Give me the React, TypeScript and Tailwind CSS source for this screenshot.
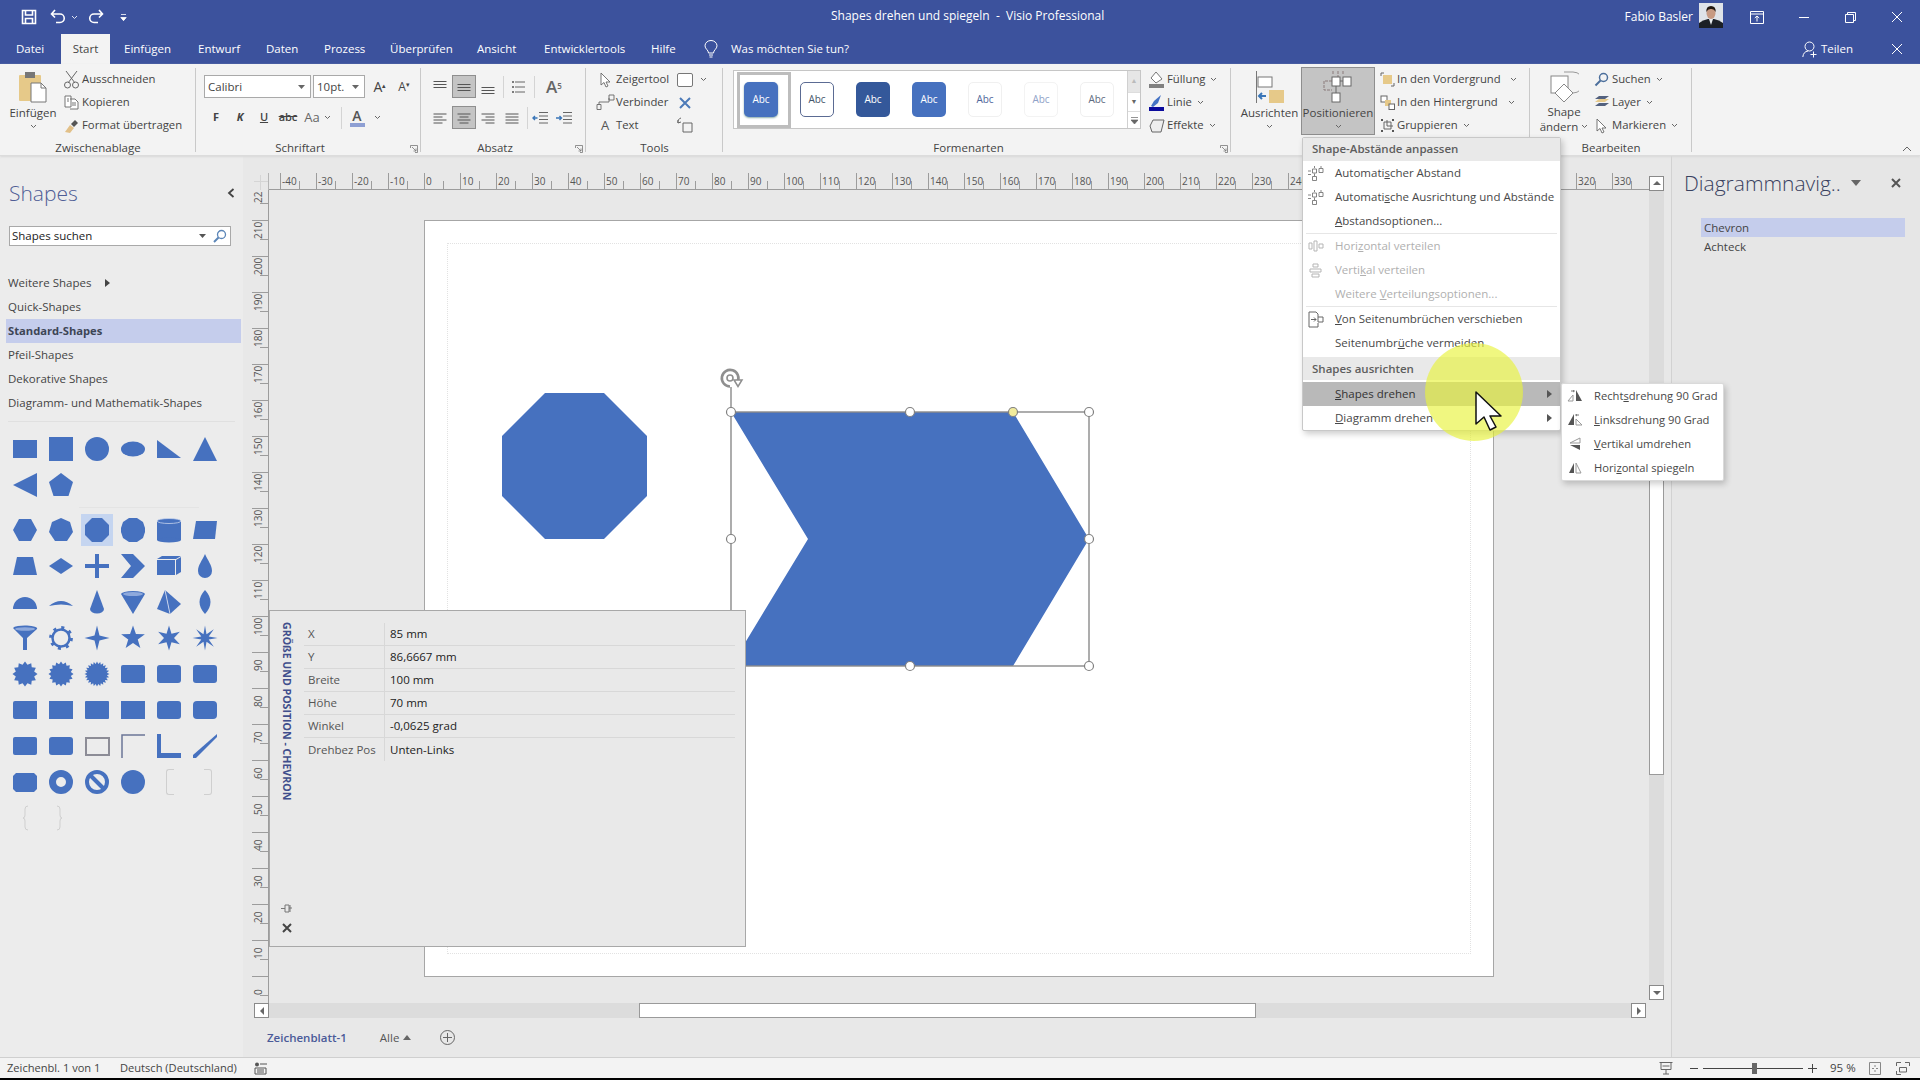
import React from "react";

const B = "#4671bf";

function star(n: number, r1: number, r2: number, rot = -90) {
  const pts: string[] = [];
  for (let i = 0; i < n * 2; i++) {
    const r = i % 2 ? r2 : r1;
    const a = ((rot + (i * 180) / n) * Math.PI) / 180;
    pts.push(`${(13 + r * Math.cos(a)).toFixed(2)},${(13 + r * Math.sin(a)).toFixed(2)}`);
  }
  return pts.join(" ");
}

const P = ({ d }: { d: string }) => <path d={d} fill={B} />;
const Poly = ({ p }: { p: string }) => <polygon points={p} fill={B} />;
const RR = ({ r = 2 }: { r?: number }) => <rect x="1" y="4" width="24" height="18" rx={r} fill={B} />;

const row1: React.ReactNode[] = [
  <rect x="1" y="4" width="24" height="18" fill={B} />,
  <rect x="1" y="1" width="24" height="24" fill={B} />,
  <circle cx="13" cy="13" r="12" fill={B} />,
  <ellipse cx="13" cy="13" rx="12" ry="7.5" fill={B} />,
  <Poly p="1,4 1,22 25,22" />,
  <Poly p="13,1 25,25 1,25" />,
];
const row2: React.ReactNode[] = [<Poly p="25,1 25,25 1,13" />, <Poly p="13,1 25,10 20.5,24 5.5,24 1,10" />];
const rows: React.ReactNode[] = [
  <Poly p="7,2 19,2 25,13 19,24 7,24 1,13" />,
  <Poly p="13,1 22,5 25,15 19,24 7,24 1,15 4,5" />,
  <Poly p="8,1 18,1 25,8 25,18 18,25 8,25 1,18 1,8" />,
  <Poly p="9,1 17,1 23,5 25,11 25,15 23,21 17,25 9,25 3,21 1,15 1,11 3,5" />,
  <g><rect x="1" y="4" width="24" height="19" fill={B} /><ellipse cx="13" cy="23" rx="12" ry="2.5" fill={B} /><ellipse cx="13" cy="4" rx="12" ry="2.5" fill={B} stroke="#c6d3ec" strokeWidth=".8" /></g>,
  <Poly p="4,4 25,4 23,22 1,22" />,
  <Poly p="5,4 21,4 25,22 1,22" />,
  <Poly p="13,5 25,13 13,21 1,13" />,
  <Poly p="11,1 15,1 15,11 25,11 25,15 15,15 15,25 11,25 11,15 1,15 1,11 11,11" />,
  <Poly p="1,1 13,1 25,13 13,25 1,25 11,13" />,
  <g><Poly p="1,7 19,7 19,22 1,22" /><Poly p="1,6 6,3 25,3 20,6" /><Poly p="20,7 25,4 25,19 20,22" /></g>,
  <P d="M13 1 C16 8 20 12 20 18 A7 7 0 0 1 6 18 C6 12 10 8 13 1Z" />,
  <P d="M1 20 A12 12 0 0 1 25 20Z" />,
  <P d="M1 17 Q13 7 25 17 Q13 14 1 17Z" />,
  <P d="M13 1 L20 20 A7 4.5 0 0 1 6 20Z" />,
  <g><P d="M1 5 A12 3 0 0 1 25 5 L13 25Z" /><ellipse cx="13" cy="5" rx="10" ry="2" fill="#8ea9dc" /></g>,
  <g><Poly p="9,1 1,20 14,25" /><Poly p="9,1 25,15 14,25" /><path d="M9 1 L14 25" stroke="#dfe6f5" strokeWidth=".8" /></g>,
  <P d="M13 1 Q24 13 13 25 Q2 13 13 1Z" />,
  <g><P d="M1 3 A12 3 0 0 1 25 4 L15 13 L15 25 L11 25 L11 13Z" /><ellipse cx="13" cy="4" rx="10" ry="1.7" fill="#8ea9dc" /></g>,
  <g fill="none" stroke={B}><circle cx="13" cy="13" r="8.5" strokeWidth="2.5" /><circle cx="13" cy="13" r="10.2" strokeDasharray="3 5" strokeWidth="3.4" /></g>,
  <Poly p={star(4, 12.5, 3.5)} />,
  <Poly p={star(5, 12.5, 5)} />,
  <Poly p={star(6, 12.5, 5)} />,
  <Poly p={star(8, 12.5, 4)} />,
  <Poly p={star(12, 12.5, 9.5)} />,
  <Poly p={star(16, 12.5, 10)} />,
  <Poly p={star(24, 12.5, 10)} />,
  <RR />, <RR r={3} />, <RR r={3} />,
  <P d="M3 4 H25 V22 H3 Q1 22 1 20 V6 Q1 4 3 4Z" />, <RR r={0} />, <RR r={1} />, <RR r={0} />, <RR r={3} />, <RR r={4} />,
  <RR r={2} />, <RR r={3} />,
  <rect x="2" y="5" width="23" height="17" fill="none" stroke="#8c8c96" strokeWidth="2" />,
  <path d="M2 25 V2 H25" fill="none" stroke="#6b7697" strokeWidth="1.5" />,
  <Poly p="1,1 5,1 5,20 25,20 25,25 1,25" />,
  <Poly p="25,1 1,22 1,25 4,25 25,4" />,
  <P d="M4 4 H22 L25 7 V20 L22 23 H4 L1 20 V7Z" />,
  <path fillRule="evenodd" fill={B} d="M13 1 A12 12 0 1 1 13 25 A12 12 0 1 1 13 1Z M13 8 A5 5 0 1 0 13 18 A5 5 0 1 0 13 8Z" />,
  <g><circle cx="13" cy="13" r="10" fill="none" stroke={B} strokeWidth="4" /><path d="M7 7 L19 19" stroke={B} strokeWidth="4" /></g>,
  <circle cx="13" cy="13" r="12" fill={B} />,
];

function ShapeCell({ node, sel }: { node: React.ReactNode; sel?: boolean }) {
  return (
    <div className="w-[36px] h-[36px] flex items-center justify-center">
      <div className={`w-[32px] h-[32px] flex items-center justify-center ${sel ? "bg-[#c5d5f0]" : ""}`}>
        <svg width="26" height="26" viewBox="0 0 26 26">{node}</svg>
      </div>
    </div>
  );
}

function Caret({ className = "" }: { className?: string }) {
  return (
    <svg width="7" height="5" viewBox="0 0 7 5" className={`shrink-0 ${className}`}>
      <path d="M1 1 L3.5 3.5 L6 1" fill="none" stroke="#666" strokeWidth="1" />
    </svg>
  );
}

function Lines({ widths, align = "left", gap = 4 }: { widths: number[]; align?: "left" | "center" | "right"; gap?: number }) {
  return (
    <svg width="14" height="14" viewBox="0 0 14 14">
      {widths.map((w, i) => {
        const x = align === "left" ? 0.5 : align === "right" ? 13.5 - w : 7 - w / 2;
        const y = 7.5 - ((widths.length - 1) * gap) / 2 + i * gap;
        return <line key={i} x1={x} x2={x + w} y1={y} y2={y} stroke="#555" strokeWidth="1" />;
      })}
    </svg>
  );
}

function GroupLabel({ children, launcher }: { children: React.ReactNode; launcher?: boolean }) {
  return (
    <div className={`h-[16px] relative flex items-center justify-center text-[11.5px] text-[#444] leading-none ${launcher ? "pr-[17px]" : ""}`}>
      {children}
      {launcher && (
        <svg width="8" height="8" viewBox="0 0 8 8" className="absolute right-[3px] top-[5px]">
          <path d="M.5 3 V.5 H7.5 V7.5 H5 M2 2 L6 6 M6 3.5 V6 H3.5" fill="none" stroke="#777" strokeWidth=".8" />
        </svg>
      )}
    </div>
  );
}

function Group({ w, children, label, launcher, sep = true }: { w: string; children: React.ReactNode; label?: string; launcher?: boolean; sep?: boolean }) {
  return (
    <div className={`${w} shrink-0 h-[92px] pt-[4px] relative flex flex-col`}>
      <div className="h-[72px] flex">{children}</div>
      <GroupLabel launcher={launcher}>{label}</GroupLabel>
      {sep && <div className="absolute right-0 top-[4px] bottom-[4px] w-px bg-[#c9c9c9]" />}
    </div>
  );
}

function RowText({ icon, text, caret, iw = "w-[20px]" }: { icon: React.ReactNode; text: string; caret?: boolean; iw?: string }) {
  return (
    <div className="h-[23px] flex items-center text-[11.3px] text-[#444] whitespace-nowrap">
      <div className={`${iw} shrink-0 flex items-center justify-center`}>{icon}</div>
      <span>{text}</span>
      {caret && <Caret className="ml-[5px]" />}
    </div>
  );
}

const sw = [
  { c: "bg-[#4671bf] text-white rounded-[5px] shadow-[0_1px_2px_#8aa]" },
  { c: "bg-white text-[#44546a] border border-[#5b6b93] rounded-[5px]" },
  { c: "bg-[#34589a] text-white rounded-[5px]" },
  { c: "bg-[#4671bf] text-white rounded-[5px]" },
  { c: "bg-white text-[#50679c] border border-[#f0f0f0] rounded-[5px]" },
  { c: "bg-white text-[#8fa2c8] border border-[#f3f3f3] rounded-[5px]" },
  { c: "bg-white text-[#5d6a80] border border-[#f0f0f0] rounded-[5px]" },
];

function TitleBar() {
  return (
    <div className="h-[34px] bg-[#3c529d] flex items-center text-white relative">
      <div className="flex items-center h-full">
        <svg width="16" height="16" viewBox="0 0 16 16" className="ml-[21px]"><path d="M1.5 1.5 H14.5 V14.5 H1.5Z M4.5 1.5 V6 H11.5 V1.5 M4.5 14.5 V9.5 H11.5 V14.5" fill="none" stroke="#fff" strokeWidth="1.6" /></svg>
        <svg width="17" height="16" viewBox="0 0 17 16" className="ml-[13px]"><path d="M5 1 L1.5 5 L5 8.5 M2 5 H10 A4.2 4.2 0 0 1 10 13.5 H6" fill="none" stroke="#fff" strokeWidth="1.6" /></svg>
        <svg width="7" height="5" viewBox="0 0 7 5" className="ml-[4px]"><path d="M1 1 L3.5 3.5 L6 1" fill="none" stroke="#dfe4f3" /></svg>
        <svg width="17" height="16" viewBox="0 0 17 16" className="ml-[9px]"><path d="M12 1 L15.5 5 L12 8.5 M15 5 H7 A4.2 4.2 0 0 0 7 13.5 H11" fill="none" stroke="#fff" strokeWidth="1.6" /></svg>
        <svg width="7" height="9" viewBox="0 0 7 9" className="ml-[16px]"><path d="M1 1.5 H6 M.8 4.5 H6.2 L3.5 7.7Z" fill="#fff" stroke="#fff" strokeWidth=".8" /></svg>
      </div>
      <div className="absolute left-[831px] top-[7px] text-[12px] leading-[17px] whitespace-pre">Shapes drehen und spiegeln  -  Visio Professional</div>
      <div className="ml-auto flex items-center h-full">
        <span className="text-[12px] mr-[6px]">Fabio Basler</span>
        <svg width="24" height="25" viewBox="0 0 24 25" className="mb-[3px]">
          <rect width="24" height="25" fill="#dfe3e8" />
          <path d="M0 25 V20 Q4 17 9 16 H15 Q20 17 24 20 V25Z" fill="#1c2026" />
          <path d="M10 16 L12 22 L14 16Z" fill="#e9edf0" />
          <ellipse cx="12" cy="10" rx="4.5" ry="6" fill="#c79a82" />
          <path d="M7.3 9 Q7 3 12 3 Q17 3 16.7 9 Q15 5.5 12 6 Q9 5.5 7.3 9Z" fill="#20170f" />
        </svg>
        <svg width="14" height="13" viewBox="0 0 14 13" className="ml-[27px]"><path d="M.5 .5 H13.5 V12.5 H.5Z M.5 3 H13.5 M7 10.5 V5 M4.8 7 L7 5 L9.2 7" fill="none" stroke="#fff" /></svg>
        <div className="ml-[35px] w-[10px] h-px bg-white" />
        <svg width="11" height="11" viewBox="0 0 11 11" className="ml-[36px]"><path d="M2.5 2.5 V.5 H10.5 V8.5 H8.5 M.5 2.5 H8.5 V10.5 H.5Z" fill="none" stroke="#fff" /></svg>
        <svg width="12" height="12" viewBox="0 0 12 12" className="ml-[35px] mr-[17px]"><path d="M1 1 L11 11 M11 1 L1 11" stroke="#fff" /></svg>
      </div>
    </div>
  );
}

const tabs: [string, string][] = [
  ["Einfügen", "w-[74px]"],
  ["Entwurf", "w-[68px]"],
  ["Daten", "w-[58px]"],
  ["Prozess", "w-[66px]"],
  ["Überprüfen", "w-[87px]"],
  ["Ansicht", "w-[67px]"],
  ["Entwicklertools", "w-[107px]"],
  ["Hilfe", "w-[53px]"],
];

function Tabs() {
  return (
    <div className="h-[30px] bg-[#3c529d] flex items-center text-white text-[11.5px] whitespace-nowrap">
      <span className="ml-[16px] w-[45px]">Datei</span>
      <div className="w-[49px] h-[30px] mr-[14px] bg-[#f3f3f3] text-[#444] flex items-center justify-center">Start</div>
      {tabs.map(([t, w]) => (
        <span key={t} className={`${w} shrink-0`}>{t}</span>
      ))}
      <svg width="14" height="19" viewBox="0 0 14 19"><path d="M4.5 13 C4.5 10 1 9 1 5.8 A6 5.3 0 0 1 13 5.8 C13 9 9.5 10 9.5 13Z M5 15 H9 M5.5 17 H8.5" fill="none" stroke="#fff" /></svg>
      <span className="ml-[13px]">Was möchten Sie tun?</span>
      <div className="ml-auto flex items-center">
        <svg width="16" height="17" viewBox="0 0 16 17"><circle cx="7.5" cy="5.5" r="4.5" fill="none" stroke="#fff" /><path d="M.8 16 Q1.5 10.5 6 10 M11.5 10.5 V16.5 M8.5 13.5 H14.5" fill="none" stroke="#fff" /></svg>
        <span className="ml-[3px]">Teilen</span>
        <svg width="12" height="12" viewBox="0 0 12 12" className="ml-[38px] mr-[17px]"><path d="M1 1 L11 11 M11 1 L1 11" stroke="#fff" /></svg>
      </div>
    </div>
  );
}

const Slot = ({ children, w = "w-[24px]", sel }: { children: React.ReactNode; w?: string; sel?: boolean }) => (
  <div className={`${w} h-[23px] flex items-center justify-center shrink-0 ${sel ? "bg-[#c4c4c4] border border-[#8e8e8e]" : ""}`}>{children}</div>
);
const VSep = () => <div className="w-px h-[22px] bg-[#d4d4d4] shrink-0" />;

function Ribbon() {
  return (
    <div className="h-[92px] bg-[#f3f3f3] flex border-b border-[#dcdcdc] shadow-[0_1px_2px_#d8d8d8] relative text-[#444]">
      <Group w="w-[196px]" label="Zwischenablage">
        <div className="w-[61px] flex flex-col items-center pl-[5px]">
          <svg width="30" height="32" viewBox="0 0 30 32" className="mt-[3px]">
            <rect x="1" y="4" width="22" height="26" rx="1" fill="#e6c989" />
            <rect x="7" y="1" width="10" height="6" fill="#777" />
            <path d="M13 12 H23 L28 17 V31 H13Z" fill="#fff" stroke="#777" />
            <path d="M23 12 V17 H28" fill="none" stroke="#777" />
          </svg>
          <span className="text-[11.5px] mt-[3px] leading-[14px]">Einfügen</span>
          <Caret className="mt-[4px]" />
        </div>
        <div className="flex flex-col">
          <RowText icon={<svg width="15" height="19" viewBox="0 0 15 19"><path d="M2 1 L11 13 M13 1 L4 13" stroke="#666" fill="none" /><circle cx="3.5" cy="15" r="3" fill="none" stroke="#666" /><circle cx="11.5" cy="15" r="3" fill="none" stroke="#666" /></svg>} text="Ausschneiden" iw="w-[21px]" />
          <RowText icon={<svg width="15" height="15" viewBox="0 0 15 15"><path d="M1 1 H7 V12 H1Z M6 4 H11 L14 7 V14 H6 M8 8 H12 M8 10 H12 M3 4 H5 M3 6 H5" fill="#fff" stroke="#666" strokeWidth=".9" /></svg>} text="Kopieren" iw="w-[21px]" />
          <RowText icon={<svg width="16" height="16" viewBox="0 0 16 16"><path d="M1 14 L6 7 L10 10 L6 15Z" fill="#e2c088" /><path d="M7 6 L11 2 L14 5 L10 9Z" fill="#555" /></svg>} text="Format übertragen" iw="w-[21px]" />
        </div>
      </Group>

      <Group w="w-[225px]" label="Schriftart" launcher>
        <div className="pl-[8px] pt-[7px] flex flex-col gap-[8px]">
          <div className="flex items-center h-[23px]">
            <div className="w-[107px] h-[23px] bg-white border border-[#a9a9a9] flex items-center justify-between px-[3px] text-[11.5px]">Calibri<svg width="7" height="4" viewBox="0 0 7 4" className="mr-[2px]"><path d="M0 0 H7 L3.5 4Z" fill="#666" /></svg></div>
            <div className="ml-[2px] w-[52px] h-[23px] bg-white border border-[#a9a9a9] flex items-center justify-between px-[3px] text-[11.5px]">10pt.<svg width="7" height="4" viewBox="0 0 7 4" className="mr-[2px]"><path d="M0 0 H7 L3.5 4Z" fill="#666" /></svg></div>
            <div className="w-[26px] text-center text-[14px] leading-none pl-[4px]">A<sup className="text-[7px]">▴</sup></div>
            <div className="w-[26px] text-center text-[12px] leading-none">A<sup className="text-[7px]">▾</sup></div>
          </div>
          <div className="flex items-center h-[23px] text-[12px]">
            <Slot><b className="text-[11px]">F</b></Slot>
            <Slot><b className="italic text-[11px]">K</b></Slot>
            <Slot><span className="underline font-semibold text-[11px]">U</span></Slot>
            <Slot><span className="line-through text-[11px] font-semibold">abc</span></Slot>
            <Slot><span className="text-[13px] text-[#666]">Aa</span></Slot>
            <Caret />
            <div className="ml-[10px]"><VSep /></div>
            <div className="w-[30px] flex flex-col items-center text-[14px] leading-[14px] font-semibold text-[#555]">A<div className="w-[15px] h-[4px] bg-[#8e9fd3]" /></div>
            <Caret className="ml-[2px]" />
          </div>
        </div>
      </Group>

      <Group w="w-[165px]" label="Absatz" launcher>
        <div className="pl-[7px] pt-[7px] flex flex-col gap-[8px]">
          <div className="flex items-center h-[23px]">
            <Slot><div className="-mt-[6px]"><Lines widths={[13, 13, 13]} gap={3} /></div></Slot>
            <Slot sel><Lines widths={[13, 13, 13]} gap={3} /></Slot>
            <Slot><div className="mt-[6px]"><Lines widths={[13, 13, 13]} gap={3} /></div></Slot>
            <div className="ml-[3px]"><VSep /></div>
            <Slot w="w-[30px]"><svg width="14" height="16" viewBox="0 0 14 16"><path d="M3 3 H13 M3 8 H13 M3 13 H13" stroke="#666" /><circle cx="1" cy="3" r="1" fill="#555" /><circle cx="1" cy="8" r="1" fill="#555" /><circle cx="1" cy="13" r="1" fill="#555" /></svg></Slot>
            <VSep />
            <Slot w="w-[38px]"><span className="text-[17px] font-semibold text-[#666] leading-none">A<sup className="text-[8px]">5</sup></span></Slot>
          </div>
          <div className="flex items-center h-[23px]">
            <Slot><Lines widths={[13, 9, 13, 9]} gap={3} /></Slot>
            <Slot sel><Lines widths={[13, 9, 13, 9]} gap={3} align="center" /></Slot>
            <Slot><Lines widths={[13, 9, 13, 9]} gap={3} align="right" /></Slot>
            <Slot><Lines widths={[13, 13, 13, 13]} gap={3} /></Slot>
            <div className="ml-[3px]"><VSep /></div>
            <Slot w="w-[24px]"><svg width="16" height="14" viewBox="0 0 16 14"><path d="M7 1.5 H16 M7 5 H16 M7 8.5 H16 M7 12 H16" stroke="#666" /><path d="M5.5 7 H1 M3 5 L1 7 L3 9" fill="none" stroke="#3a76b8" strokeWidth="1.4" /></svg></Slot>
            <Slot w="w-[24px]"><svg width="16" height="14" viewBox="0 0 16 14"><path d="M7 1.5 H16 M7 5 H16 M7 8.5 H16 M7 12 H16" stroke="#666" /><path d="M0 7 H5 M3.5 5 L5.5 7 L3.5 9" fill="none" stroke="#3a76b8" strokeWidth="1.4" /></svg></Slot>
          </div>
        </div>
      </Group>

      <Group w="w-[137px]" label="Tools">
        <div className="flex flex-col pl-[8px]">
          <RowText icon={<svg width="11" height="16" viewBox="0 0 11 16"><path d="M1 1 V13 L4 10.5 L6 15 L8 14 L6 10 H10Z" fill="#fff" stroke="#666" strokeWidth=".9" /></svg>} text="Zeigertool" iw="w-[22px]" />
          <RowText icon={<svg width="19" height="17" viewBox="0 0 19 17"><path d="M1 10.5 H5 V15.5 H1Z M13 1 H18 V6 H13Z M3 10.5 V8 H13 V4" fill="none" stroke="#666" strokeWidth=".9" /></svg>} text="Verbinder" iw="w-[22px]" />
          <RowText icon={<span className="text-[13px] text-[#555]">A</span>} text="Text" iw="w-[22px]" />
        </div>
        <div className="flex flex-col ml-[8px] w-[38px] items-start">
          <div className="h-[23px] flex items-center"><div className="w-[16px] h-[14px] bg-white border border-[#777] rounded-[2px]" /><Caret className="ml-[7px]" /></div>
          <div className="h-[23px] flex items-center pl-[2px]"><svg width="12" height="12" viewBox="0 0 12 12"><path d="M1 1 L11 11 M11 1 L1 11" stroke="#4c7ab8" strokeWidth="2" /></svg></div>
          <div className="h-[23px] flex items-center"><svg width="17" height="17" viewBox="0 0 17 17"><path d="M6 6 H15 V15 H6Z" fill="none" stroke="#666" /><path d="M4 1 A4 4 0 0 0 1 6 M1 3 L1 6 L4 5" fill="none" stroke="#666" /></svg></div>
        </div>
      </Group>

      <Group w="w-[508px]" label="Formenarten" launcher>
        <div className="pl-[10px] pt-[2px] flex items-start">
          <div className="w-[408px] h-[59px] bg-white border border-[#c6c6c6] flex items-center relative">
            <div className="absolute left-[3px] top-[1px] w-[54px] h-[56px] border-[3px] border-[#bdbdbd]" />
            <div className="flex ml-[10px] gap-[22px] relative">
              {sw.map((s, i) => (
                <div key={i} className={`w-[34px] h-[35px] flex items-center justify-center text-[10px] ${s.c}`}>Abc</div>
              ))}
            </div>
            <div className="ml-auto w-[13px] h-full flex flex-col border-l border-[#d0d0d0]">
              <div className="h-[21px] bg-[#e6e6e6] flex items-center justify-center text-[7px] text-[#bbb]">▲</div>
              <div className="h-[19px] flex items-center justify-center text-[7px] text-[#666] border-t border-[#ddd]">▼</div>
              <div className="flex-1 flex items-center justify-center border-t border-[#ddd]"><svg width="7" height="7" viewBox="0 0 7 7"><path d="M0 .5 H7 M0 3 H7 L3.5 7Z" stroke="#666" strokeWidth=".7" fill="#666" /></svg></div>
            </div>
          </div>
          <div className="flex flex-col ml-[5px] -mt-[2px]">
            <RowText iw="w-[21px]" caret text="Füllung" icon={<svg width="17" height="17" viewBox="0 0 17 17"><path d="M8 1 L14 8 L8 12 L3 7Z" fill="#fff" stroke="#777" /><rect x="1" y="13" width="15" height="4" fill="#808080" /></svg>} />
            <RowText iw="w-[21px]" caret text="Linie" icon={<svg width="17" height="17" viewBox="0 0 17 17"><path d="M3 12 L6 7 L13 1 L10 9 L5 13Z" fill="#4472c4" /><rect x="1" y="13" width="15" height="4" fill="#0a0a9c" /></svg>} />
            <RowText iw="w-[21px]" caret text="Effekte" icon={<svg width="16" height="16" viewBox="0 0 16 16"><path d="M4 2 H15 L12 14 H3 L1 8Z" fill="#eee" stroke="#666" /></svg>} />
          </div>
        </div>
      </Group>

      <Group w="w-[299px]">
        <div className="w-[70px] flex flex-col items-center pl-[7px] text-[11.5px]">
          <svg width="28" height="32" viewBox="0 0 28 32" className="mt-[3px]">
            <path d="M.5 0 V32" stroke="#777" />
            <rect x="2" y="6" width="14" height="10" fill="#fff" stroke="#777" />
            <rect x="13" y="19" width="15" height="13" fill="#e6c989" />
            <path d="M3 25 H10 M6 22 L3 25 L6 28" fill="none" stroke="#3a76b8" strokeWidth="2" />
          </svg>
          <span className="mt-[3px] leading-[14px]">Ausrichten</span>
          <Caret className="mt-[4px]" />
        </div>
        <div className="w-[74px] h-[68px] -mt-[1px] bg-[#c4c4c4] border border-[#8e8e8e] flex flex-col items-center text-[11.5px]">
          <svg width="30" height="32" viewBox="0 0 30 32" className="mt-[3px]">
            <path d="M15 0 V7 M9 10 H1 V19 H9 M10 0 V3 M20 0 V3" stroke="#8a7a7a" fill="none" strokeDasharray="3 1" />
            <rect x="9" y="6" width="8" height="9" fill="#fff" stroke="#666" />
            <rect x="20" y="6" width="8" height="9" fill="#fff" stroke="#666" />
            <rect x="9" y="22" width="8" height="9" fill="#fff" stroke="#666" />
            <path d="M13 15 V22 M17 10 H20" stroke="#666" />
          </svg>
          <span className="mt-[3px] leading-[14px] whitespace-nowrap">Positionieren</span>
          <Caret className="mt-[4px]" />
        </div>
        <div className="flex flex-col pl-[2px]">
          <div className="flex items-center"><RowText iw="w-[20px]" text="In den Vordergrund" icon={<svg width="15" height="15" viewBox="0 0 15 15"><path d="M1 4 V1 H4 M11 14 H14 V11" fill="none" stroke="#666" /><rect x="3" y="3" width="9" height="9" fill="#e6c989" /></svg>} /><Caret className="ml-[9px]" /></div>
          <div className="flex items-center"><RowText iw="w-[20px]" text="In den Hintergrund" icon={<svg width="15" height="15" viewBox="0 0 15 15"><rect x="1" y="1" width="6" height="6" fill="#fff" stroke="#666" /><rect x="5" y="5" width="6" height="6" fill="#e6c989" /><rect x="9" y="9" width="5.5" height="5.5" fill="#fff" stroke="#666" /></svg>} /><Caret className="ml-[10px]" /></div>
          <RowText iw="w-[20px]" caret text="Gruppieren" icon={<svg width="15" height="15" viewBox="0 0 15 15"><path d="M4 4 H11 V11 H4Z M7 2 V8 H13" fill="none" stroke="#666" /><path d="M1 1 H3 V3 H1Z M12 1 H14 V3 H12Z M1 12 H3 V14 H1Z M12 12 H14 V14 H12Z" fill="#555" /></svg>} />
        </div>
      </Group>

      <Group w="w-[162px]" label="Bearbeiten">
        <div className="w-[68px] -mr-[7px] flex flex-col items-center text-[11.5px]">
          <svg width="30" height="32" viewBox="0 0 30 32" className="mt-[3px]">
            <path d="M15 1 H24 A10 10 0 0 1 24 22 L18 28" fill="none" stroke="#999" />
            <rect x="2" y="5" width="17" height="17" fill="#fff" stroke="#888" />
            <path d="M15 13 L24 22 L15 31 L6 22Z" fill="#fff" stroke="#888" />
          </svg>
          <span className="leading-[15px] mt-[1px]">Shape</span>
          <span className="leading-[15px] flex items-center whitespace-nowrap">ändern<Caret className="ml-[3px]" /></span>
        </div>
        <div className="flex flex-col">
          <RowText iw="w-[21px]" caret text="Suchen" icon={<svg width="15" height="15" viewBox="0 0 15 15"><circle cx="9.5" cy="5.5" r="4" fill="none" stroke="#4c6f9c" strokeWidth="1.5" /><path d="M6.5 8.5 L1.5 13.5" stroke="#4c6f9c" strokeWidth="2" /></svg>} />
          <RowText iw="w-[21px]" caret text="Layer" icon={<svg width="16" height="15" viewBox="0 0 16 15"><path d="M1 11 L5 8 H15 L11 11Z" fill="#53617e" /><path d="M1 7 L5 4 H15 L11 7Z" fill="#e6c989" /><path d="M1 4 L5 1 H15 L11 4Z" fill="#53617e" /></svg>} />
          <RowText iw="w-[21px]" caret text="Markieren" icon={<svg width="11" height="16" viewBox="0 0 11 16"><path d="M1 1 V13 L4 10.5 L6 15 L8 14 L6 10 H10Z" fill="#fff" stroke="#666" strokeWidth=".9" /></svg>} />
        </div>
      </Group>

      <div className="flex-1 relative">
        <svg width="10" height="6" viewBox="0 0 10 6" className="absolute right-[8px] bottom-[3px]"><path d="M1 5 L5 1 L9 5" fill="none" stroke="#666" /></svg>
      </div>
    </div>
  );
}

const sideItems = ["Quick-Shapes", "Standard-Shapes", "Pfeil-Shapes", "Dekorative Shapes", "Diagramm- und Mathematik-Shapes"];

function Sidebar() {
  return (
    <div className="w-[243px] shrink-0 bg-[#ececec] flex flex-col">
      <div className="pt-[20px] pl-[9px] pr-[8px] flex items-center justify-between h-[54px]">
        <span className="text-[21px] font-light text-[#4f5d95] leading-[34px]">Shapes</span>
        <svg width="8" height="10" viewBox="0 0 8 10"><path d="M6.5 1 L2 5 L6.5 9" fill="none" stroke="#444" strokeWidth="1.8" /></svg>
      </div>
      <div className="ml-[9px] mt-[16px] w-[222px] h-[20px] bg-white border border-[#a9a9a9] flex items-center pl-[2px] pr-[3px] text-[11.5px] text-[#222] justify-between">
        <span className="-mt-px">Shapes suchen</span>
        <span className="flex items-center gap-[7px]">
          <svg width="7" height="4" viewBox="0 0 7 4"><path d="M0 0 H7 L3.5 4Z" fill="#555" /></svg>
          <svg width="14" height="14" viewBox="0 0 14 14"><circle cx="8.5" cy="5.5" r="4" fill="none" stroke="#5c86b8" strokeWidth="1.3" /><path d="M5.5 8.5 L1 13" stroke="#5c86b8" strokeWidth="2" /></svg>
        </span>
      </div>
      <div className="mt-[25px] text-[11.5px] text-[#444]">
        <div className="h-[24px] ml-[6px] pl-[2px] flex items-center">
          Weitere Shapes
          <svg width="5" height="8" viewBox="0 0 5 8" className="ml-[14px]"><path d="M0 0 L5 4 L0 8Z" fill="#444" /></svg>
        </div>
        {sideItems.map((t) => (
          <div key={t} className={`h-[24px] ml-[6px] mr-[2px] pl-[2px] flex items-center whitespace-nowrap ${t === "Standard-Shapes" ? "bg-[#c5cdec] font-bold text-[#3d4555] text-[11.2px]" : ""}`}>{t}</div>
        ))}
      </div>
      <div className="h-px bg-[#e0e0e0] mt-[6px] mx-[8px]" />
      <div className="pl-[7px] mt-[9px]">
        <div className="grid grid-cols-[repeat(6,36px)]">
          {row1.map((n, i) => <ShapeCell key={i} node={n} />)}
          {row2.map((n, i) => <ShapeCell key={i} node={n} />)}
        </div>
        <div className="h-px w-[120px] ml-[72px] bg-[#e4e4e4] mt-[4px] mb-[4px]" />
        <div className="grid grid-cols-[repeat(6,36px)]">
          {rows.map((n, i) => <ShapeCell key={i} node={n} sel={i === 2} />)}
          <div className="col-span-2 h-[36px] flex items-center justify-between pl-[15px] pr-[11px]">
            <div className="w-[8px] h-[26px] border-l border-y border-[#cfcfcf] rounded-l-[3px]" />
            <div className="w-[8px] h-[26px] border-r border-y border-[#cfcfcf] rounded-r-[3px]" />
          </div>
          <div className="col-span-2 h-[36px] flex items-center justify-between pl-[15px] pr-[16px]">
            <svg width="7" height="26" viewBox="0 0 7 26"><path d="M6 1 Q3 1 3 4 V10 Q3 13 1 13 Q3 13 3 16 V22 Q3 25 6 25" fill="none" stroke="#cfcfcf" /></svg>
            <svg width="7" height="26" viewBox="0 0 7 26"><path d="M1 1 Q4 1 4 4 V10 Q4 13 6 13 Q4 13 4 16 V22 Q4 25 1 25" fill="none" stroke="#cfcfcf" /></svg>
          </div>
        </div>
      </div>
    </div>
  );
}

const hTicks = Array.from({ length: 38 }, (_, i) => -40 + i * 10);
const vTicks = Array.from({ length: 23 }, (_, i) => 220 - i * 10);

function HRuler() {
  return (
    <div className="flex-1 h-[17px] flex pl-[11px] overflow-hidden border-b border-[#9c9c9c]">
      {hTicks.map((t) => (
        <div key={t} className="w-[36px] shrink-0 h-full border-l border-[#9c9c9c] relative pl-[1px] text-[10px] leading-[17px] text-[#555]">
          {t >= 250 && t <= 310 ? null : t}
          <div className="absolute left-[18px] bottom-0 h-[8px] w-px bg-[#9c9c9c]" />
        </div>
      ))}
    </div>
  );
}

function VRuler() {
  return (
    <div className="w-[17px] shrink-0 border-r border-[#9c9c9c] overflow-hidden">
      <div className="-mt-[6px]">
        {vTicks.map((t) => (
          <div key={t} className="h-[36px] border-t border-[#9c9c9c] relative text-[10px] text-[#555]">
            <div className="absolute left-0 top-[1px] h-[17px] leading-[12px] [writing-mode:vertical-rl] rotate-180 whitespace-nowrap">{t === 220 ? "22" : t}</div>
            <div className="absolute right-0 top-[18px] w-[8px] h-px bg-[#9c9c9c]" />
          </div>
        ))}
      </div>
    </div>
  );
}

const handles: [number, number][] = [[307, 192], [486, 192], [665, 192], [307, 319], [665, 319], [307, 446], [486, 446], [665, 446]];

function Page() {
  return (
    <div className="ml-[155px] mt-[30px] w-[1070px] h-[757px] bg-white border border-[#a6a6a6] relative">
      <div className="absolute left-[22px] top-[22px] right-[22px] bottom-[22px] border border-dotted border-[#e2e2e2]" />
      <svg width="1070" height="757" viewBox="0 0 1070 757" className="absolute -left-px -top-px">
        <polygon points="121,173 180,173 223,216 223,276 180,319 121,319 78,276 78,216" fill={B} />
        <polygon points="307,192 589,192 665,319 589,446 307,446 384,319" fill={B} />
        <rect x="307" y="192" width="358" height="254" fill="none" stroke="#8a8a8a" strokeWidth="1.4" />
        <path d="M307 167 V192" stroke="#8a8a8a" strokeWidth="1.4" />
        {handles.map(([x, y]) => <circle key={`${x}-${y}`} cx={x} cy={y} r="4.5" fill="#fff" stroke="#808080" strokeWidth="1.2" />)}
        <circle cx="589" cy="192" r="4.5" fill="#f1eb9c" stroke="#808080" strokeWidth="1.2" />
        <circle cx="306" cy="158" r="3" fill="#fff" stroke="#8f8f8f" strokeWidth="1.6" />
        <path d="M313.5 162 A8.3 8.3 0 1 0 306 166.5" fill="none" stroke="#8f8f8f" strokeWidth="2.6" />
        <path d="M310 160 L318 160 L314 166.5Z" fill="#fff" stroke="#8f8f8f" strokeWidth="1.5" />
      </svg>
    </div>
  );
}

function ScrollBtn({ dir }: { dir: "up" | "down" | "left" | "right" }) {
  const p = { up: "M1 6 L5 2 L9 6Z", down: "M1 3 L9 3 L5 7Z", left: "M7 1 L7 9 L3 5Z", right: "M3 1 L3 9 L7 5Z" }[dir];
  return (
    <div className="w-[15px] h-[15px] shrink-0 bg-white border border-[#8a8a8a] flex items-center justify-center">
      <svg width="10" height="10" viewBox="0 0 10 10"><path d={p} fill="#666" /></svg>
    </div>
  );
}

function Center() {
  return (
    <div className="flex-1 min-w-0 bg-[#e8e8e8] flex flex-col">
      <div className="h-[17px] shrink-0" />
      <div className="flex-1 min-h-0 flex">
        <div className="w-[1397px] ml-[9px] shrink-0 flex flex-col">
          <div className="h-[17px] shrink-0 flex">
            <div className="w-[17px] shrink-0 border-r border-[#b5b5b5] relative">
              <div className="absolute left-[2px] right-0 top-[8px] h-px bg-[#d5d5d5]" />
              <div className="absolute left-[8px] top-[2px] bottom-0 w-px bg-[#d5d5d5]" />
            </div>
            <HRuler />
          </div>
          <div className="flex-1 min-h-0 flex overflow-hidden">
            <VRuler />
            <div className="flex-1 min-w-0"><Page /></div>
          </div>
        </div>
        <div className="w-[15px] shrink-0 pt-[3px] pb-[3px] flex flex-col">
          <ScrollBtn dir="up" />
          <div className="flex-1 bg-[#dcdcdc] flex flex-col">
            <div className="mt-[192px] h-[392px] bg-white border border-[#9a9a9a]" />
          </div>
          <ScrollBtn dir="down" />
        </div>
      </div>
      <div className="h-[15px] shrink-0 flex pl-[11px]">
        <ScrollBtn dir="left" />
        <div className="w-[1362px] bg-[#dcdcdc] shrink-0">
          <div className="ml-[370px] w-[617px] h-[15px] bg-white border border-[#9a9a9a]" />
        </div>
        <ScrollBtn dir="right" />
      </div>
      <div className="h-[39px] shrink-0 flex items-center pl-[24px] text-[11.5px]">
        <span className="font-semibold text-[#4a5a98]">Zeichenblatt-1</span>
        <span className="ml-[33px] text-[#555]">Alle</span>
        <svg width="8" height="5" viewBox="0 0 8 5" className="ml-[4px]"><path d="M0 5 L4 0 L8 5Z" fill="#666" /></svg>
        <svg width="15" height="15" viewBox="0 0 15 15" className="ml-[29px]"><circle cx="7.5" cy="7.5" r="7" fill="none" stroke="#666" /><path d="M7.5 3 V12 M3 7.5 H12" stroke="#666" /></svg>
      </div>
    </div>
  );
}

function RightPane() {
  return (
    <div className="w-[249px] shrink-0 bg-[#e6e6e6] border-l border-[#d2d2d2]">
      <div className="pl-[12px] pr-[19px] flex items-center h-[56px]">
        <span className="text-[21px] font-light text-[#39415f] whitespace-nowrap">Diagrammnavig..</span>
        <svg width="10" height="6" viewBox="0 0 10 6" className="ml-[10px] -mt-[3px]"><path d="M0 0 H10 L5 6Z" fill="#666" /></svg>
        <svg width="10" height="10" viewBox="0 0 10 10" className="ml-auto -mt-[3px]"><path d="M1 1 L9 9 M9 1 L1 9" stroke="#555" strokeWidth="2" /></svg>
      </div>
      <div className="ml-[29px] mr-[15px] mt-[6px] text-[11.5px] text-[#444]">
        <div className="h-[19px] bg-[#c5cdec] pl-[3px] flex items-center">Chevron</div>
        <div className="h-[19px] pl-[3px] flex items-center">Achteck</div>
      </div>
    </div>
  );
}

function StatusBar() {
  return (
    <div className="h-[21px] bg-[#f3f3f3] border-t border-[#cfcfcf] flex items-center text-[11.1px] text-[#444] whitespace-nowrap">
      <span className="ml-[7px] w-[113px] shrink-0">Zeichenbl. 1 von 1</span>
      <span className="w-[134px] shrink-0">Deutsch (Deutschland)</span>
      <svg width="13" height="13" viewBox="0 0 13 13"><circle cx="3" cy="2.5" r="2" fill="#555" /><path d="M6 2 H13 M1 6 H12 V12 H1Z M3 8 H10 M3 10 H10" stroke="#555" fill="none" /></svg>
      <div className="ml-auto flex items-center">
        <svg width="14" height="14" viewBox="0 0 14 14"><path d="M.5 1.5 H13.5 M2 1.5 V8.5 H12 V1.5 M7 8.5 V13 M4 13 H10 M3.5 5 H10.5" stroke="#666" fill="none" /></svg>
        <div className="ml-[17px] w-[8px] h-px bg-[#444]" />
        <div className="ml-[5px] w-[100px] h-px bg-[#444] relative">
          <div className="absolute left-[49px] -top-[5px] w-[5px] h-[11px] bg-[#666]" />
        </div>
        <svg width="9" height="9" viewBox="0 0 9 9" className="ml-[5px]"><path d="M4.5 0 V9 M0 4.5 H9" stroke="#444" /></svg>
        <span className="ml-[13px] w-[26px] text-[11.5px]">95 %</span>
        <svg width="12" height="13" viewBox="0 0 12 13" className="ml-[13px]"><path d="M.5 .5 H11.5 V12.5 H.5Z M6 3 V5 M6 8 V10 M3 6.5 H5 M7 6.5 H9" stroke="#888" fill="none" /></svg>
        <svg width="14" height="13" viewBox="0 0 14 13" className="ml-[15px] mr-[10px]"><path d="M.5 4 V.5 H5 M9 .5 H13.5 V4 M.5 9 V12.5 H5 M3.5 5.5 H10.5 V10 H3.5Z" stroke="#666" fill="none" /></svg>
      </div>
    </div>
  );
}

const spacingIcon = (
  <svg width="16" height="15" viewBox="0 0 16 15"><path d="M4.5 3 H8.5 V7 H4.5Z M11 2.5 H15 V6.5 H11Z M4.5 10.5 H8.5 V14.5 H4.5Z M0 5 H3 M0 8.5 H3 M6.5 0 V2 M13 0 V2 M6.5 7.5 V10" fill="none" stroke="#777" strokeWidth=".9" /></svg>
);

const I = {
  spacing: spacingIcon,
  hdist: <svg width="16" height="12" viewBox="0 0 16 12"><path d="M1 3 H4 V9 H1Z M6 1 H9 V11 H6Z M11 4 H15 V8 H11Z" fill="none" stroke="#b5b5b5" /></svg>,
  vdist: <svg width="13" height="15" viewBox="0 0 13 15"><path d="M4 1 H9 V4 H4Z M1 6 H12 V9 H1Z M3 11 H10 V14 H3Z" fill="none" stroke="#b5b5b5" /></svg>,
  page: <svg width="16" height="17" viewBox="0 0 16 17"><path d="M1 1 H8 L10 3 V6 M10 12 V16 H1 V1 M3 8.5 H8 M6 6.5 L8 8.5 L6 10.5 M10 6 H15 V11 H10Z" fill="none" stroke="#666" /></svg>,
  rr: <svg width="16" height="12" viewBox="0 0 16 12"><path d="M1 11 L6 5 V11Z" fill="#fff" stroke="#999" /><path d="M4 1 H7 M6 0 L7.5 1 L6 2" fill="none" stroke="#777" /><path d="M9 11 H15 L9 0Z" fill="#555" /></svg>,
  rl: <svg width="16" height="12" viewBox="0 0 16 12"><path d="M1 11 H7 V0Z" fill="#555" /><path d="M9 5 V11 H15Z" fill="#fff" stroke="#999" /><path d="M12 1 H9 M10 0 L8.5 1 L10 2" fill="none" stroke="#777" /></svg>,
  vf: <svg width="12" height="14" viewBox="0 0 12 14"><path d="M11 1 V6 H1Z" fill="#fff" stroke="#999" /><path d="M1 8 H11 V13Z" fill="#555" /></svg>,
  hf: <svg width="14" height="12" viewBox="0 0 14 12"><path d="M6 1 V11 H1Z" fill="#555" /><path d="M8 1 V11 H13Z" fill="#fff" stroke="#999" /></svg>,
};

function MRow({ icon, children, disabled, sel, arrow }: { icon?: React.ReactNode; children: React.ReactNode; disabled?: boolean; sel?: boolean; arrow?: boolean }) {
  return (
    <div className={`h-[24px] flex items-center whitespace-nowrap ${sel ? "bg-[#b9b9b9]" : ""} ${disabled ? "text-[#b0b0b0]" : sel ? "text-[#333]" : "text-[#484848]"}`}>
      <div className="w-[25px] shrink-0 flex items-center justify-center">{icon}</div>
      <span className="ml-[7px]">{children}</span>
      {arrow && <svg width="5" height="8" viewBox="0 0 5 8" className="ml-auto mr-[8px]"><path d="M0 0 L5 4 L0 8Z" fill="#555" /></svg>}
    </div>
  );
}

const MHead = ({ children, className = "" }: { children: React.ReactNode; className?: string }) => (
  <div className={`h-[23px] bg-[#e9e9e9] flex items-center pl-[9px] font-semibold text-[#5e5e5e] ${className}`}>{children}</div>
);

function Menu() {
  return (
    <div className="absolute left-[1302px] top-[137px] w-[259px] h-[294px] bg-white border border-[#c8c8c8] rounded-[2px] shadow-[2px_3px_6px_rgba(0,0,0,0.2)] text-[11.5px] z-20">
      <MHead><span className="-mt-px">Shape-Abstände anpassen</span></MHead>
      <MRow icon={I.spacing}>Automati<u>s</u>cher Abstand</MRow>
      <MRow icon={I.spacing}>Automati<u>s</u>che Ausrichtung und Abstände</MRow>
      <MRow><u>A</u>bstandsoptionen...</MRow>
      <div className="h-px bg-[#e6e6e6] mx-[3px]" />
      <MRow disabled icon={I.hdist}>Hori<u>z</u>ontal verteilen</MRow>
      <MRow disabled icon={I.vdist}>Verti<u>k</u>al verteilen</MRow>
      <MRow disabled>Weitere <u>V</u>erteilungsoptionen...</MRow>
      <div className="h-px bg-[#e6e6e6] mx-[3px]" />
      <MRow icon={I.page}><u>V</u>on Seitenumbrüchen verschieben</MRow>
      <MRow>Seitenumbr<u>ü</u>che vermeiden</MRow>
      <MHead className="mt-[2px]">Shapes ausrichten</MHead>
      <div className="h-[2px]" />
      <MRow sel arrow><u>S</u>hapes drehen</MRow>
      <MRow arrow><u>D</u>iagramm drehen</MRow>
    </div>
  );
}

function SubMenu() {
  const R = ({ icon, children }: { icon: React.ReactNode; children: React.ReactNode }) => (
    <div className="h-[24px] flex items-center whitespace-nowrap text-[#484848]">
      <div className="w-[25px] shrink-0 flex items-center justify-center">{icon}</div>
      <span className="ml-[7px]">{children}</span>
    </div>
  );
  return (
    <div className="absolute left-[1561px] top-[383px] w-[163px] h-[98px] bg-white border border-[#dadada] rounded-[2px] shadow-[2px_3px_6px_rgba(0,0,0,0.2)] text-[11.2px] z-20">
      <R icon={I.rr}>Recht<u>s</u>drehung 90 Grad</R>
      <R icon={I.rl}><u>L</u>inksdrehung 90 Grad</R>
      <R icon={I.vf}><u>V</u>ertikal umdrehen</R>
      <R icon={I.hf}>Hori<u>z</u>ontal spiegeln</R>
    </div>
  );
}

function PropPanel() {
  const data = [["X", "85 mm"], ["Y", "86,6667 mm"], ["Breite", "100 mm"], ["Höhe", "70 mm"], ["Winkel", "-0,0625 grad"], ["Drehbez Pos", "Unten-Links"]];
  return (
    <div className="absolute left-[269px] top-[610px] w-[477px] h-[337px] bg-[#e9e9e9] border border-[#a8a8a8] flex z-10 text-[11.5px]">
      <div className="w-[33px] shrink-0 pt-[11px] pb-[13px] flex flex-col items-center">
        <div className="[writing-mode:vertical-rl] text-[10.6px] font-bold text-[#404e8c] whitespace-nowrap">GRÖßE UND POSITION - CHEVRON</div>
        <svg width="11" height="9" viewBox="0 0 11 9" className="mt-auto mb-[10px]"><path d="M0 4.5 H4 M4 1 H8 V8 H4Z M8 4 H11 M9 1 V8" stroke="#777" fill="none" /></svg>
        <svg width="10" height="10" viewBox="0 0 10 10"><path d="M1 1 L9 9 M9 1 L1 9" stroke="#444" strokeWidth="2" /></svg>
      </div>
      <div className="pt-[12px] w-[431px] ml-[1px]">
        {data.map(([k, v], i) => (
          <div key={k} className={`h-[23px] flex items-center ${i < 5 ? "border-b border-[#d8d8d8]" : ""}`}>
            <div className="w-[81px] h-full pl-[4px] flex items-center border-r border-[#d8d8d8] text-[#555] whitespace-nowrap">{k}</div>
            <div className="pl-[5px] text-[#222]">{v}</div>
          </div>
        ))}
      </div>
    </div>
  );
}

export default function App() {
  return (
    <div className="w-[1920px] h-[1080px] relative overflow-hidden flex flex-col bg-[#e8e8e8] font-['Open_Sans','Noto_Sans',sans-serif]">
      <TitleBar />
      <Tabs />
      <Ribbon />
      <div className="h-[901px] flex min-h-0">
        <Sidebar />
        <Center />
        <RightPane />
      </div>
      <StatusBar />
      <div className="h-[2px] bg-black" />
      <PropPanel />
      <Menu />
      <SubMenu />
      <div className="absolute left-[1425px] top-[343px] w-[98px] h-[98px] rounded-full bg-[rgba(232,243,60,0.65)] z-30" />
      <svg width="28" height="41" viewBox="0 0 28 41" className="absolute left-[1475px] top-[391px] z-40">
        <path d="M1 1 L1 33 L9 26 L15 39 L21 36 L15 25 L26 25 Z" fill="#fff" stroke="#111" strokeWidth="1.5" strokeLinejoin="round" />
      </svg>
    </div>
  );
}
